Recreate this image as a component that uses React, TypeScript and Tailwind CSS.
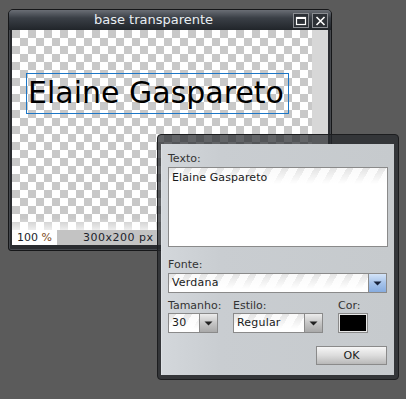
import React from "react";

function Tri({ color }: { color: string }) {
  return (
    <svg width="9" height="5" viewBox="0 0 9 5">
      <path d="M0.5 0.5 H8.5 L4.5 4.5 Z" fill={color} />
    </svg>
  );
}

function Select({
  value,
  width,
  blue,
}: {
  value: string;
  width: string;
  blue?: boolean;
}) {
  return (
    <div
      className={`${width} h-[20px] flex border border-[#8a8a8a] bg-white bg-[linear-gradient(180deg,rgba(255,255,255,0)_0,#fff_15px),repeating-linear-gradient(120deg,#e4e4e4_0_6px,#fafafa_6px_14px)]`}
    >
      <div className="flex-1 pl-[3px] text-[11px] leading-[18px] text-[#1a1a1a] tracking-[0.2px]">
        {value}
      </div>
      <div
        className={`w-[18px] h-full border-l border-[#8a8a8a] flex items-center justify-center ${
          blue
            ? "bg-[linear-gradient(#d4e4f8,#a6c3ea_50%,#86acdf)]"
            : "bg-[linear-gradient(#ececec,#c6c6c6_50%,#a9a9a9)]"
        }`}
      >
        <Tri color={blue ? "#16223a" : "#222"} />
      </div>
    </div>
  );
}

export default function App() {
  return (
    <div className="relative w-[406px] h-[399px] bg-[#5b5b5b] overflow-hidden font-['DejaVu_Sans',Verdana,sans-serif]">
      {/* Main window */}
      <div className="absolute left-[8px] top-[9px] w-[324px] h-[242px] rounded-t-[5px] rounded-b-[3px] border border-[#161719] bg-[#2a2c30] flex flex-col shadow-[inset_0_0_0_1px_#45484d]">
        <div className="h-[20px] flex items-center rounded-t-[4px] bg-[linear-gradient(#6a6e75,#3a3f46_40%,#21252a)]">
          <span className="flex-1 text-center pl-[5px] text-[13px] leading-[20px] text-[#e9eef3]">
            base transparente
          </span>
          <div className="flex gap-[3px] pr-[3px] pt-[1px]">
            <div className="w-[16px] h-[15px] border border-[#8b8e93] bg-[#2c3036] flex items-center justify-center">
              <svg width="12" height="10" viewBox="0 0 12 10">
                <rect x="1.5" y="1.5" width="9" height="7" fill="none" stroke="#fff" strokeWidth="1.2" />
                <rect x="1" y="1" width="10" height="2" fill="#fff" />
              </svg>
            </div>
            <div className="w-[16px] h-[15px] border border-[#8b8e93] bg-[#2c3036] flex items-center justify-center">
              <svg width="11" height="10" viewBox="0 0 11 10">
                <path d="M1.5 1 L9.5 9 M9.5 1 L1.5 9" stroke="#fff" strokeWidth="1.6" />
              </svg>
            </div>
          </div>
        </div>
        <div className="mx-[3px] mb-[5px] flex flex-col">
          <div className="relative h-[200px] flex">
            <div className="relative w-[300px] h-full bg-[conic-gradient(#fff_25%,#c8c8c8_0_50%,#fff_0_75%,#c8c8c8_0)] bg-[length:16px_16px]">
              <div className="absolute left-[14px] top-[43px] w-[263px] h-[41px] border border-[#1c76c6] pl-[1px] text-[30px] leading-[38px] text-black whitespace-nowrap">
                Elaine Gaspareto
              </div>
            </div>
            <div className="flex-1 bg-[#d7d7d7]" />
            <div className="absolute left-0 right-0 bottom-0 h-[12px] bg-[linear-gradient(rgba(255,255,255,0),rgba(255,255,255,0.7))]" />
          </div>
          <div className="h-[15px] flex text-[11px] leading-[15px] text-[#1c1f2c]">
            <div className="w-[45px] bg-white pl-[5px]">
              100 <span className="text-[#7a4a1a]">%</span>
            </div>
            <div className="flex-1 bg-[#c3c3c3] pl-[26px] tracking-[0.5px]">300x200 px</div>
          </div>
        </div>
      </div>

      {/* Text dialog */}
      <div className="absolute left-[157px] top-[134px] w-[242px] h-[246px] rounded-[4px] border border-[#1c1d1f] bg-[rgba(38,40,44,0.72)] pt-[9px] pl-[3px] pr-[4px] pb-[4px] flex flex-col">
        <div className="flex-1 flex flex-col bg-[linear-gradient(90deg,#d3d7db,#c9cdd1_25%,#c6cacd)] border-l border-[#dde1e5] pt-[8px] pl-[6px] pr-[6px]">
          <div className="text-[11px] leading-[13px] text-[#333]">Texto:</div>
          <div className="mt-[2px] h-[80px] border border-[#8a8a8a] bg-white bg-[linear-gradient(180deg,rgba(255,255,255,0)_0,#fff_16px),repeating-linear-gradient(120deg,#e4e4e4_0_6px,#fafafa_6px_14px)] pl-[3px] pt-[3px] text-[11px] leading-[13px] text-[#1a1a1a] tracking-[0.1px]">
            Elaine Gaspareto
          </div>
          <div className="mt-[11px] text-[11px] leading-[13px] text-[#333]">Fonte:</div>
          <div className="mt-[2px]">
            <Select value="Verdana" width="w-[219px]" blue />
          </div>
          <div className="mt-[6px] flex gap-[15px]">
            <div className="w-[50px] flex flex-col">
              <div className="text-[11px] leading-[13px] text-[#333] whitespace-nowrap">Tamanho:</div>
              <div className="mt-[1px]">
                <Select value="30" width="w-[50px]" />
              </div>
            </div>
            <div className="w-[90px] flex flex-col">
              <div className="text-[11px] leading-[13px] text-[#333] whitespace-nowrap">Estilo:</div>
              <div className="mt-[1px]">
                <Select value="Regular" width="w-[90px]" />
              </div>
            </div>
            <div className="w-[30px] flex flex-col">
              <div className="text-[11px] leading-[13px] text-[#333] whitespace-nowrap">Cor:</div>
              <div className="mt-[1px] w-[30px] h-[20px] border border-[#8a8a8a] p-[1px] bg-[#e8e8e8]">
                <div className="w-full h-full bg-black" />
              </div>
            </div>
          </div>
          <div className="mt-[13px] flex justify-end pr-[1px]">
            <div className="w-[71px] h-[19px] border border-[#8a8a8a] bg-[linear-gradient(#f6f6f6,#dcdcdc_50%,#b8b8b8)] text-center text-[11px] leading-[17px] text-[#1a1a1a]">
              OK
            </div>
          </div>
        </div>
      </div>
    </div>
  );
}
